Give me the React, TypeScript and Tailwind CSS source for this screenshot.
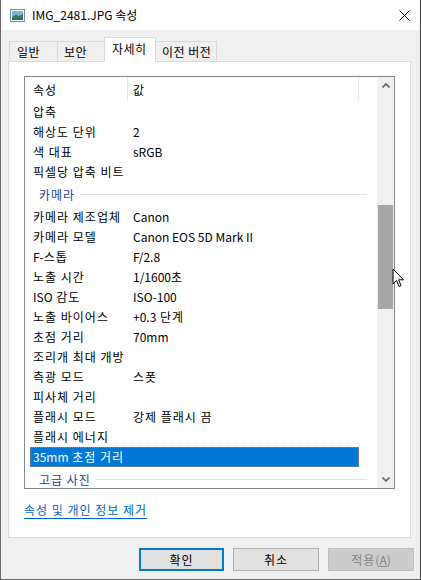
import React from 'react';

type Row = { label: string; value?: string; group?: boolean; selected?: boolean };

const rows: Row[] = [
  { label: '압축' },
  { label: '해상도 단위', value: '2' },
  { label: '색 대표', value: 'sRGB' },
  { label: '픽셀당 압축 비트' },
  { label: '카메라', group: true },
  { label: '카메라 제조업체', value: 'Canon' },
  { label: '카메라 모델', value: 'Canon EOS 5D Mark II' },
  { label: 'F-스톱', value: 'F/2.8' },
  { label: '노출 시간', value: '1/1600초' },
  { label: 'ISO 감도', value: 'ISO-100' },
  { label: '노출 바이어스', value: '+0.3 단계' },
  { label: '초점 거리', value: '70mm' },
  { label: '조리개 최대 개방' },
  { label: '측광 모드', value: '스폿' },
  { label: '피사체 거리' },
  { label: '플래시 모드', value: '강제 플래시 끔' },
  { label: '플래시 에너지' },
  { label: '35mm 초점 거리', selected: true },
  { label: '고급 사진', group: true },
];

// hangul runs are a touch wider in the original font, so space them out a bit
function Ko({ text }: { text: string }) {
  const parts = text.split(/([\uAC00-\uD7A3 ]+)/);
  return (
    <>
      {parts.map((p, i) =>
        /[\uAC00-\uD7A3]/.test(p) ? (
          <span key={i} className="tracking-[1px]">
            {p}
          </span>
        ) : (
          <span key={i}>{p}</span>
        )
      )}
    </>
  );
}

function PictureIcon() {
  return (
    <svg width="15" height="13" viewBox="0 0 15 13">
      <rect x="0.5" y="0.5" width="14" height="12" fill="#ffffff" stroke="#6f8fae" />
      <rect x="2" y="2" width="11" height="9" fill="#7fb3d8" />
      <path d="M2 8 L6 5.5 L9 7 L13 5 L13 11 L2 11 Z" fill="#3b7a5a" />
      <path d="M2 10 L13 9 L13 11 L2 11 Z" fill="#2d5f7f" />
    </svg>
  );
}

function Chevron({ down }: { down?: boolean }) {
  return (
    <svg width="8" height="5" viewBox="0 0 8 5" className={down ? 'rotate-180' : ''}>
      <path d="M0.5 4.5 L4 1 L7.5 4.5" fill="none" stroke="#606060" strokeWidth="1.6" />
    </svg>
  );
}

function ListRow({ row }: { row: Row }) {
  if (row.group) {
    return (
      <div className="flex items-center h-[25px] pl-[9px] pr-[10px] shrink-0">
        <span className="text-[#1c3d96]">
          <Ko text={row.label} />
        </span>
        <div className="flex-1 h-px bg-[#dfe4ec] ml-[5px]" />
      </div>
    );
  }
  return (
    <div
      className={
        'flex items-center h-[20px] w-[329px] shrink-0 ' +
        (row.selected ? 'bg-[#0078d7] text-white outline outline-1 outline-dotted outline-[#6b8fb5] -outline-offset-1' : 'text-black')
      }
    >
      <span className="w-[103px] pl-[3px] whitespace-nowrap">
        <Ko text={row.label} />
      </span>
      <span className="whitespace-nowrap">
        <Ko text={row.value ?? ''} />
      </span>
    </div>
  );
}

export default function App() {
  return (
    <div className="relative w-[421px] h-[580px] overflow-hidden bg-[#f0f0f0] border-x border-b border-l-[#6a6a6a] border-r-[#3f3f3f] border-b-[#6a6a6a] flex flex-col text-[12px] leading-[16px] text-black font-['Noto_Sans_CJK_KR',sans-serif]">
      {/* title bar */}
      <div className="h-[30px] bg-white flex items-center shrink-0">
        <div className="ml-[9px] mt-px">
          <PictureIcon />
        </div>
        <span className="ml-[7px] text-[12px]">IMG_2481.JPG 속성</span>
        <div className="flex-1" />
        <svg width="11" height="11" viewBox="0 0 11 11" className="mr-[10px]">
          <path d="M0.5 0.5 L10.5 10.5 M10.5 0.5 L0.5 10.5" stroke="#111" strokeWidth="1" />
        </svg>
      </div>

      {/* tabs */}
      <div className="flex items-end h-[31px] pl-[8px] shrink-0 relative z-10">
        <div className="h-[20px] w-[49px] border border-b-0 border-[#d9d9d9] bg-[#f0f0f0] flex items-center pl-[7px] tracking-[0.5px]">일반</div>
        <div className="h-[20px] w-[48px] -ml-px border border-b-0 border-[#d9d9d9] bg-[#f0f0f0] flex items-center pl-[6px] tracking-[0.5px]">보안</div>
        <div className="h-[25px] w-[52px] -ml-px -mb-px border border-b-0 border-[#d9d9d9] bg-white flex items-center pl-[7px] pb-[2px] tracking-[0.5px]">자세히</div>
        <div className="h-[20px] w-[62px] -ml-px border border-b-0 border-[#d9d9d9] bg-[#f0f0f0] flex items-center pl-[6px] tracking-[0.5px]">이전 버전</div>
      </div>

      {/* tab panel */}
      <div className="ml-[7px] w-[403px] h-[477px] border border-[#d9d9d9] bg-white shrink-0 pl-[15px] pt-[14px] flex flex-col">
        <div className="w-[371px] h-[413px] border border-[#828790] flex shrink-0">
          <div className="flex-1 flex flex-col overflow-hidden">
            {/* header */}
            <div className="flex h-[25px] shrink-0">
              <div className="w-[102px] pl-[8px] flex items-center">
                <Ko text="속성" />
              </div>
              <div className="w-px h-[24px] bg-[#e5e5e5]" />
              <div className="w-[230px] pl-[5px] flex items-center">값</div>
              <div className="w-px h-[24px] bg-[#e5e5e5]" />
            </div>
            <div className="flex flex-col pl-[5px]">
              {rows.map((r) => (
                <ListRow key={r.label} row={r} />
              ))}
            </div>
          </div>
          {/* scrollbar */}
          <div className="w-[17px] bg-[#f0f0f0] flex flex-col shrink-0">
            <div className="h-[17px] flex items-center justify-center shrink-0">
              <Chevron />
            </div>
            <div className="h-[111px] shrink-0" />
            <div className="h-[104px] mx-px bg-[#a6a6a6] shrink-0" />
            <div className="flex-1" />
            <div className="h-[17px] flex items-center justify-center shrink-0">
              <Chevron down />
            </div>
          </div>
        </div>
        <div className="mt-[13px]">
          <span className="text-[#0066cc] underline underline-offset-[3px] tracking-[1px]">속성 및 개인 정보 제거</span>
        </div>
      </div>

      {/* buttons */}
      <div className="flex mt-[10px] pl-[138px] gap-[9px] shrink-0">
        <div className="w-[85px] h-[23px] bg-[#e1e1e1] border-2 border-[#0078d7] flex items-center justify-center tracking-[1px]">확인</div>
        <div className="w-[86px] h-[23px] bg-[#e1e1e1] border border-[#adadad] flex items-center justify-center tracking-[1px]">취소</div>
        <div className="w-[86px] h-[23px] bg-[#cccccc] border border-[#bfbfbf] flex items-center justify-center text-[#838383]">
          <span className="tracking-[1px]">적용</span>(<span className="underline">A</span>)
        </div>
      </div>

      {/* mouse cursor */}
      <svg width="13" height="21" viewBox="0 0 13 21" className="absolute left-[391px] top-[268px] z-20">
        <path d="M1 1 L1 16 L4.5 12.5 L7 18.5 L9 17.7 L6.6 11.8 L11.5 11.8 Z" fill="#fff" stroke="#000" strokeWidth="1" strokeLinejoin="round" />
      </svg>
    </div>
  );
}
